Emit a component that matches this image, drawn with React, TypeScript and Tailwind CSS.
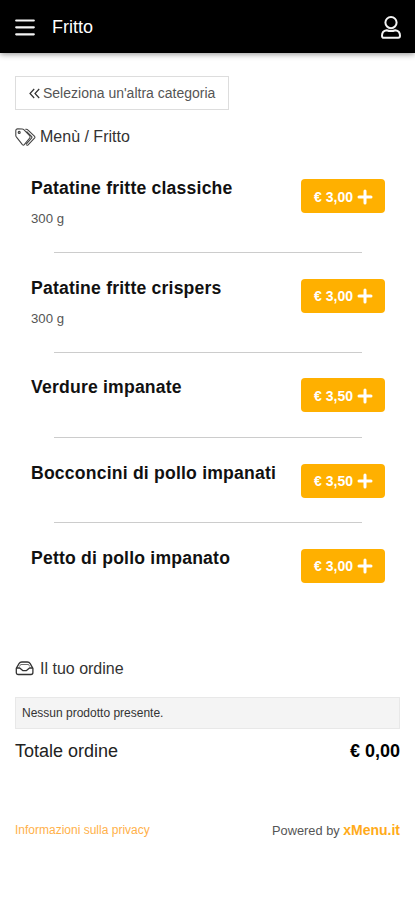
const products = [
    { name: "Patatine fritte classiche", note: "300 g", price: "3,00" },
    { name: "Patatine fritte crispers", note: "300 g", price: "3,00" },
    { name: "Verdure impanate", price: "3,50" },
    { name: "Bocconcini di pollo impanati", price: "3,50" },
    { name: "Petto di pollo impanato", price: "3,00" },
];

const MenuIcon = () => (
    <svg width="20" height="18" viewBox="0 0 20 18" stroke="#f4f4f4" strokeWidth="2.2" strokeLinecap="round">
        <path d="M1.2 2.5h17.6M1.2 9.3h17.6M1.2 16.3h17.6" />
    </svg>
);

const UserIcon = () => (
    <svg width="20" height="24" viewBox="0 0 20 24" fill="none" stroke="#f4f4f4" strokeWidth="2">
        <circle cx="10" cy="7.6" r="5.6" />
        <path d="M5.6 15.2C7 15.7 8.4 16 10 16s3-.3 4.400-.8c2.500.3 4.600 2.400 4.600 5.600 0 1.300-.6 2-1.800 2H2.800C1.600 22.800 1 22.100 1 20.800c0-3.200 2.100-5.300 4.600-5.600z" />
    </svg>
);

const TagsIcon = () => (
    <svg width="21" height="19" viewBox="0 0 21 19" fill="none" stroke="#444" strokeWidth="1.1" strokeLinejoin="round">
        <path d="M.8 2.800C.8 1.500 1.500.9 2.700.9l4.600.1c.6 0 1 .2 1.500.7l5.800 6c.8.8.8 1.500.1 2.300l-5.400 6.600c-.6.7-1.200.7-1.900 0L1.500 9.200C1 8.700.8 8.200.8 7.600z" />
        <circle cx="4.200" cy="4.400" r="1" />
        <path d="M10.300 1.200h1c.6 0 1.100.2 1.500.7l6.600 6.300c.7.7.7 1.200.1 1.900l-6.400 6.800c-.4.400-1 .5-1.600.2M11.500 3.500l5 4.800c.6.6.6 1.100 0 1.800L11 16.400" />
    </svg>
);

const InboxIcon = () => (
    <svg width="19" height="15" viewBox="0 0 19 15" fill="none" stroke="#333" strokeWidth="1.3" strokeLinejoin="round">
        <path d="M1.300 7.300L4 2.700C4.700 1.500 5.500 1 6.800 1h5.600c1.300 0 2.100.5 2.800 1.700l2.700 4.600v4.200c0 1.300-.7 2-2 2H3.300c-1.300 0-2-.7-2-2z" />
        <path d="M1.500 7h3.200l3 2.600h3.800l3-2.600h3.200" />
        <path d="M4.500 5.500l1.200-2h7.800l1.200 2" strokeWidth=".7" />
    </svg>
);

const AddButton = ({ price }: { price: string }) => (
    <button className="-mr-px flex h-[34px] w-[84px] shrink-0 items-center justify-center gap-1 rounded-[4px] bg-[#ffb000] pt-px pl-px text-sm font-bold text-white">
        <span>€ {price}</span>
        <svg width="16" height="16" viewBox="0 0 16 16" stroke="white" strokeWidth="3" strokeLinecap="round">
            <path d="M8 2v12M2 8h12" />
        </svg>
    </button>
);

const App = () => {
    return (
        <div className="min-h-[900px] w-full bg-white font-['Liberation_Sans',Arial,sans-serif] text-[#333]">
            <header className="flex h-[53px] items-center bg-black pr-[14px] pl-[15px] text-white shadow-[0_1px_6px_rgba(0,0,0,0.45)]">
                <MenuIcon />
                <h1 className="ml-[17px] flex-1 text-lg">Fritto</h1>
                <UserIcon />
            </header>

            <main className="px-[15px] pt-[23px]">
                <button className="flex h-[34px] w-[214px] items-center border border-[#ddd] pl-[13px] text-sm whitespace-nowrap text-[#555]">
                    <svg width="11" height="11" viewBox="0 0 11 11" fill="none" stroke="#333" strokeWidth="1.2" className="mr-[3px]">
                        <path d="M5.200 1L1 5.500 5.200 10M10.200 1L6 5.500l4.200 4.500" />
                    </svg>
                    Seleziona un'altra categoria
                </button>

                <nav className="mt-[15px] flex h-6 items-center text-base">
                    <TagsIcon />
                    <span className="ml-1">Menù / Fritto</span>
                </nav>

                <ul className="mt-3 px-4">
                    {products.map((product, i) => (
                        <li key={product.name}>
                            <div className={`flex justify-between pt-[18px] ${product.note ? "h-[91px]" : "h-[76.8px]"}`}>
                                <div className="-mt-px">
                                    <h2 className="text-[17.6px] leading-5 font-bold tracking-[0.2px] text-[#111]">{product.name}</h2>
                                    {product.note && <p className="mt-[11px] text-[13.2px] leading-5 text-[#555]">{product.note}</p>}
                                </div>
                                <AddButton price={product.price} />
                            </div>
                            {i < products.length - 1 && <hr className="mr-[22px] mb-[7.6px] ml-[23px] border-[#ccc]" />}
                        </li>
                    ))}
                </ul>

                <section className="mt-[49px]">
                    <h3 className="flex h-6 items-center">
                        <InboxIcon />
                        <span className="ml-[6px]">Il tuo ordine</span>
                    </h3>
                    <div className="mt-4 flex h-8 items-center border border-[#e8e8e8] bg-[#f4f4f4] pl-[6px] text-xs">
                        Nessun prodotto presente.
                    </div>
                    <div className="mt-2 flex h-7 items-center justify-between text-lg text-[#222]">
                        <span>Totale ordine</span>
                        <strong className="text-black">€ 0,00</strong>
                    </div>
                </section>

                <footer className="mt-[55px] flex h-5 items-center justify-between text-xs">
                    <a className="text-[#ffb14a]">Informazioni sulla privacy</a>
                    <span className="text-[12.8px] text-[#555]">
                        Powered by <b className="text-sm text-[#ffab1a]">xMenu.it</b>
                    </span>
                </footer>
            </main>
        </div>
    );
};

export default App;
